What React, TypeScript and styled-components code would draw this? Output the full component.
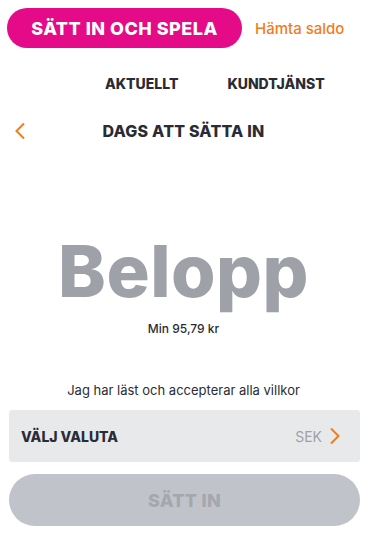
import React from 'react';
import styled, { createGlobalStyle } from 'styled-components';

const GlobalStyle = createGlobalStyle`
	html, body {
		margin: 0;
		padding: 0;
		background: #ffffff;
	}
	body {
		font-family: Inter, 'Liberation Sans', sans-serif;
		color: #2a2c35;
	}
`;

const Page = styled.div`
	width: 367px;
	height: 540px;
	display: flex;
	flex-direction: column;
	overflow: hidden;
`;

const TopBar = styled.div`
	display: flex;
	align-items: center;
	padding: 8px 0 0 7px;
	gap: 13px;
`;

const PlayButton = styled.button`
	width: 235px;
	height: 40px;
	border: none;
	border-radius: 20px;
	background: #e50a87;
	color: #ffffff;
	font-family: Inter, sans-serif;
	font-weight: 800;
	font-size: 18px;
	letter-spacing: 0.5px;
	padding: 0;
`;

const BalanceLink = styled.span`
	color: #f07d1c;
	font-size: 15px;
	font-weight: 500;
`;

const Nav = styled.nav`
	display: flex;
	padding: 27px 0 0 105px;
	gap: 49px;
`;

const NavItem = styled.span`
	font-weight: 800;
	font-size: 14px;
	color: #2a2c35;
`;

const Header = styled.div`
	display: grid;
	grid-template-columns: 40px 1fr 40px;
	align-items: center;
	padding-top: 29px;
`;

const Back = styled.div`
	display: flex;
	padding-left: 14px;
`;

const Title = styled.h1`
	margin: 0;
	text-align: center;
	font-weight: 800;
	font-size: 16px;
	letter-spacing: 0.2px;
	color: #2a2c35;
`;

const Amount = styled.div`
	display: flex;
	flex-direction: column;
	align-items: center;
	padding-top: 88px;
`;

const AmountLabel = styled.div`
	font-weight: 800;
	font-size: 72px;
	line-height: 84px;
	color: #9fa1a9;
	letter-spacing: 0.5px;
`;

const MinText = styled.div`
	font-size: 12px;
	font-weight: 500;
	margin-top: 8px;
	color: #2a2c35;
`;

const Terms = styled.div`
	text-align: center;
	font-size: 13px;
	font-weight: 400;
	margin-top: 46px;
	color: #2a2c35;
`;

const Currency = styled.div`
	margin: 12px 7px 0 9px;
	height: 52px;
	background: #e8e9eb;
	border-radius: 3px;
	display: flex;
	align-items: center;
	padding: 0 19px 0 12px;
`;

const CurrencyLabel = styled.span`
	font-weight: 800;
	font-size: 14px;
	flex: 1;
`;

const CurrencyValue = styled.span`
	color: #9fa1a9;
	font-size: 14px;
	margin-right: 7px;
`;

const Submit = styled.button`
	margin: 12px 7px 0 9px;
	height: 52px;
	border: none;
	border-radius: 26px;
	background: #c1c3ca;
	color: #a5a7ae;
	font-family: Inter, sans-serif;
	font-weight: 800;
	font-size: 18px;
	letter-spacing: 0.3px;
`;

const Chevron = ({ left }: { left?: boolean }) => (
	<svg width="12" height="18" viewBox="0 0 12 18" fill="none">
		<path
			d={left ? 'M10 1.5L2.5 9L10 16.5' : 'M2 1.5L9.5 9L2 16.5'}
			stroke="#f07d1c"
			strokeWidth="2"
		/>
	</svg>
);

export default function App() {
	return (
		<Page>
			<GlobalStyle />
			<TopBar>
				<PlayButton>SÄTT IN OCH SPELA</PlayButton>
				<BalanceLink>Hämta saldo</BalanceLink>
			</TopBar>
			<Nav>
				<NavItem>AKTUELLT</NavItem>
				<NavItem>KUNDTJÄNST</NavItem>
			</Nav>
			<Header>
				<Back>
					<Chevron left />
				</Back>
				<Title>DAGS ATT SÄTTA IN</Title>
				<span />
			</Header>
			<Amount>
				<AmountLabel>Belopp</AmountLabel>
				<MinText>Min 95,79 kr</MinText>
			</Amount>
			<Terms>Jag har läst och accepterar alla villkor</Terms>
			<Currency>
				<CurrencyLabel>VÄLJ VALUTA</CurrencyLabel>
				<CurrencyValue>SEK</CurrencyValue>
				<Chevron />
			</Currency>
			<Submit>SÄTT IN</Submit>
		</Page>
	);
}
